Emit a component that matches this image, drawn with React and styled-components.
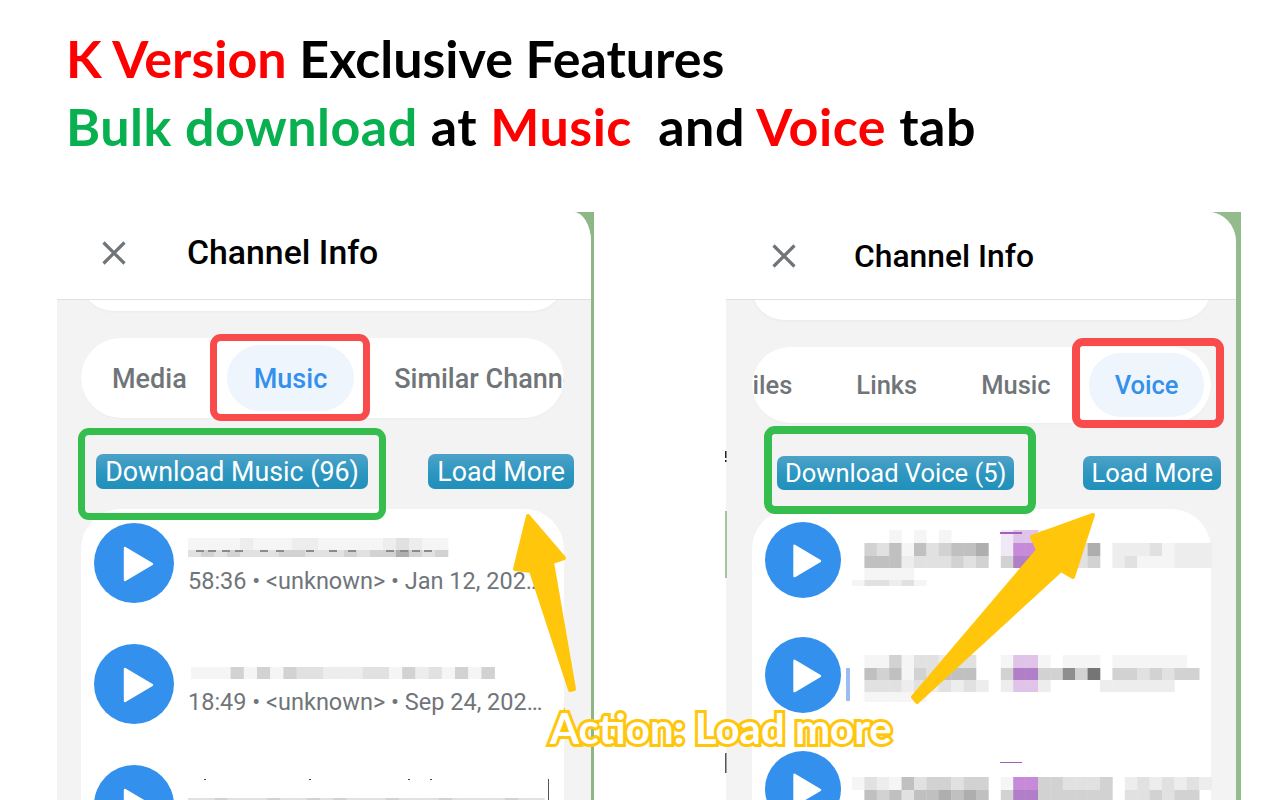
import styled, { ThemeProvider, createGlobalStyle } from "styled-components";

const GlobalStyle = createGlobalStyle`
  html, body {
    margin: 0;
    background: #fff;
    font-family: Roboto, "Liberation Sans", sans-serif;
  }
`;

const leftPanel = {
  width: 537,
  strip: 3,
  stripBg: "#8db886",
  corners: "18px 18px 0 0 / 22px 30px 0 0",
  headerTitle: 33.8,
  headerShift: 6,
  closeLeft: 45,
  titleGap: 61,
  sidePadLeft: 24,
  sidePadRight: 27,
  stub: 11,
  tabsHeight: 80,
  tabFont: 27,
  tabPad: 27,
  tabPill: 66,
  tabLine: 68,
  tabsAlign: "flex-start",
  tabsPadLeft: 4,
  toolbarTop: 36,
  buttonHeight: 35,
  buttonFont: 26.8,
  buttonPad: 9,
  toolbarPadLeft: 15,
  toolbarOver: 10,
  listTop: 20,
  rowHeight: 121,
  rowTop: 14,
  play: 80,
  rowGap: 14,
};

const rightPanel = {
  width: 515,
  strip: 5,
  stripBg: "#93bb8c",
  corners: "28px 28px 0 0 / 28px 30px 0 0",
  headerTitle: 31.8,
  headerShift: 0,
  closeLeft: 46,
  titleGap: 58,
  sidePadLeft: 26,
  sidePadRight: 25,
  stub: 20,
  tabsHeight: 76,
  tabFont: 25.5,
  tabPad: 25.5,
  tabPill: 64,
  tabLine: 64,
  tabsAlign: "flex-end",
  tabsPadLeft: 0,
  toolbarTop: 33,
  buttonHeight: 34,
  buttonFont: 25.5,
  buttonPad: 8,
  toolbarPadLeft: 25,
  toolbarOver: 10,
  listTop: 19,
  rowHeight: 114.5,
  rowTop: 13,
  play: 76,
  rowGap: 11,
};

const shades = {
  a: "#f5f5f5",
  b: "#ededed",
  c: "#e1e1e1",
  d: "#d2d2d2",
  e: "#c0c0c0",
  f: "#aeaeae",
  g: "#8e8e8e",
  h: "#747474",
  p: "#c68ad8",
  q: "#b17ec8",
  r: "#dfc3e8",
  s: "#f1e8f5",
};

const Page = styled.div`
  position: relative;
  width: 1280px;
  height: 800px;
  overflow: hidden;
  background: #fff;
`;

const Heading = styled.header`
  height: 212px;
  box-sizing: border-box;
  padding: 24px 0 0 66px;
  font-family: Lato, "Open Sans", sans-serif;
  font-weight: 700;
  font-size: 52px;
  line-height: 68px;
  color: #000;
  white-space: pre;
`;

const HeadingLine = styled.div`
  letter-spacing: ${(p) => p.$spacing || 0}px;
`;

const Accent = styled.span`
  color: ${(p) => p.$color};
`;

const Panels = styled.main`
  display: flex;
  gap: 132px;
  padding-left: 57px;
  height: 588px;
`;

const Panel = styled.section`
  width: ${(p) => p.theme.width}px;
  height: 100%;
  box-sizing: border-box;
  padding-right: ${(p) => p.theme.strip}px;
  background: linear-gradient(90deg, transparent 90%, ${(p) => p.theme.stripBg} 90%);
`;

const Sheet = styled.div`
  height: 100%;
  display: flex;
  flex-direction: column;
  overflow: hidden;
  background: #f3f3f4;
  border-radius: ${(p) => p.theme.corners};
`;

const PanelHeader = styled.div`
  position: relative;
  z-index: 1;
  flex: none;
  height: 88px;
  box-sizing: border-box;
  display: flex;
  align-items: center;
  padding: 0 0 ${(p) => p.theme.headerShift}px ${(p) => p.theme.closeLeft}px;
  gap: ${(p) => p.theme.titleGap}px;
  background: #fff;
  border-bottom: 1px solid #dfdfe7;
`;

const CloseIcon = styled.svg`
  width: 24px;
  height: 24px;
  flex: none;
`;

const PanelTitle = styled.h1`
  margin: 0;
  font-size: ${(p) => p.theme.headerTitle}px;
  font-weight: 500;
  color: #000;
`;

const Body = styled.div`
  padding: 0 ${(p) => p.theme.sidePadRight}px 0 ${(p) => p.theme.sidePadLeft}px;
`;

// the card above the tabs is scrolled under the header, only its bottom shows
const ProfileStub = styled.div`
  height: 80px;
  margin-top: ${(p) => p.theme.stub - 80}px;
  background: #fff;
  border-radius: 0 0 32px 32px;
  box-shadow: 0 1px 3px rgba(0, 0, 0, 0.04);
`;

const Tabs = styled.nav`
  margin-top: 27px;
  height: ${(p) => p.theme.tabsHeight}px;
  box-sizing: border-box;
  display: flex;
  align-items: center;
  justify-content: ${(p) => p.theme.tabsAlign};
  gap: 13px;
  padding: 0 7px 0 ${(p) => p.theme.tabsPadLeft}px;
  overflow: hidden;
  background: #fff;
  border-radius: 40px;
  box-shadow: 0 1px 2px rgba(0, 0, 0, 0.03);
`;

const Tab = styled.div`
  flex: none;
  height: ${(p) => p.theme.tabPill}px;
  line-height: ${(p) => p.theme.tabLine}px;
  padding: 0 ${(p) => p.theme.tabPad}px;
  border-radius: 33px;
  font-size: ${(p) => p.theme.tabFont}px;
  font-weight: 500;
  color: ${(p) => (p.$active ? "#3390ec" : "#707579")};
  background: ${(p) => (p.$active ? "#eef5fd" : "transparent")};
  white-space: nowrap;
`;

const Toolbar = styled.div`
  margin: ${(p) => p.theme.toolbarTop}px -${(p) => p.theme.toolbarOver}px 0 0;
  padding-left: ${(p) => p.theme.toolbarPadLeft}px;
  display: flex;
  justify-content: space-between;
`;

const ActionButton = styled.button`
  height: ${(p) => p.theme.buttonHeight}px;
  min-width: ${(p) => p.$min || 0}px;
  padding: 2px ${(p) => p.theme.buttonPad}px 0;
  border: none;
  border-radius: 7px;
  background: linear-gradient(180deg, #4ea2c8 0%, #2f97c0 50%, #1f90bb 100%);
  color: #fff;
  font-family: Roboto, sans-serif;
  font-size: ${(p) => p.theme.buttonFont}px;
  font-weight: 400;
  line-height: 1;
  white-space: nowrap;
`;

const List = styled.div`
  margin-top: ${(p) => p.theme.listTop}px;
  padding-top: ${(p) => p.theme.rowTop}px;
  padding-left: 13px;
  height: 400px;
  background: #fff;
  border-radius: 40px 40px 0 0;
`;

const Row = styled.div`
  height: ${(p) => p.theme.rowHeight}px;
  display: flex;
  gap: ${(p) => p.theme.rowGap}px;
`;

const PlayCircle = styled.svg`
  flex: none;
  width: ${(p) => p.theme.play}px;
  height: ${(p) => p.theme.play}px;
`;

const Info = styled.div`
  min-width: 0;
  flex: 1;
`;

const Blur = styled.svg`
  display: block;
  overflow: visible;
`;

const Meta = styled.div`
  font-size: 23.5px;
  line-height: 30px;
  color: #707579;
  white-space: nowrap;
`;

const Highlight = styled.div`
  position: absolute;
  left: ${(p) => p.$x}px;
  top: ${(p) => p.$y}px;
  width: ${(p) => p.$w}px;
  height: ${(p) => p.$h}px;
  box-sizing: border-box;
  border: ${(p) => p.$b}px solid ${(p) => p.$color};
  border-radius: 11px;
`;

const Overlay = styled.svg`
  position: absolute;
  inset: 0;
  pointer-events: none;
`;

const Callout = styled.div`
  position: absolute;
  left: 550px;
  top: 701px;
  font-family: Lato, sans-serif;
  font-size: 42px;
  line-height: 54px;
  font-weight: 700;
  color: #fff;
  white-space: nowrap;
  -webkit-text-stroke: 6px #ffc60b;
  paint-order: stroke fill;
`;

const Close = () => (
  <CloseIcon viewBox="0 0 24 24">
    <path d="M1.5 1.5 22.5 22.5M22.5 1.5 1.5 22.5" stroke="#707579" strokeWidth="3.2" fill="none" />
  </CloseIcon>
);

const Play = () => (
  <PlayCircle viewBox="0 0 80 80">
    <circle cx="40" cy="40" r="40" fill="#3390ec" />
    <path d="M31 25 58 41 31 57Z" fill="#fff" stroke="#fff" strokeWidth="2.4" strokeLinejoin="round" />
  </PlayCircle>
);

// pixelated names from the screenshot, one string per mosaic band
const Mosaic = ({ width, height, x0, cell, bands, extras = [] }) => (
  <Blur width={width} height={height}>
    <defs>
      <filter id="soft" x="-5%" y="-5%" width="110%" height="110%">
        <feGaussianBlur stdDeviation="0.7" />
      </filter>
    </defs>
    <g filter="url(#soft)">
      {bands.map((band) =>
        [...band.cells].map((c, i) =>
          shades[c] ? (
            <rect
              key={`${band.y}-${i}`}
              x={x0 + i * cell}
              y={band.y}
              width={cell + 0.3}
              height={band.h}
              fill={shades[c]}
            />
          ) : null
        )
      )}
    </g>
    {extras.map((r) => (
      <rect key={`${r.x}-${r.y}`} x={r.x} y={r.y} width={r.w} height={r.h} fill={r.fill} />
    ))}
  </Blur>
);

const nameBits = [8, 20, 34, 47, 72, 88, 118, 141, 160, 198, 212, 224, 236].map((x) => ({
  x,
  y: 27,
  w: 8,
  h: 2,
  fill: "#8b8b8b",
}));

const MusicTab = () => (
  <ThemeProvider theme={leftPanel}>
    <Panel>
      <Sheet>
        <PanelHeader>
          <Close />
          <PanelTitle>Channel Info</PanelTitle>
        </PanelHeader>
        <Body>
          <ProfileStub />
          <Tabs>
            <Tab>Media</Tab>
            <Tab $active>Music</Tab>
            <Tab>Similar Channels</Tab>
          </Tabs>
          <Toolbar>
            <ActionButton $min={272}>Download Music (96)</ActionButton>
            <ActionButton>Load More</ActionButton>
          </Toolbar>
          <List>
            <Row>
              <Play />
              <Info>
                <Mosaic
                  width={370}
                  height={43}
                  x0={0}
                  cell={13}
                  bands={[
                    { y: 15, h: 12, cells: "aaaabaaabbaaaaabcbaa" },
                    { y: 27, h: 7, cells: "cdcdcccddcccdcddfdcd" },
                  ]}
                  extras={nameBits}
                />
                <Meta>58:36 • &lt;unknown&gt; • Jan 12, 202…</Meta>
              </Info>
            </Row>
            <Row>
              <Play />
              <Info>
                <Mosaic
                  width={370}
                  height={43}
                  x0={3}
                  cell={13.2}
                  bands={[{ y: 23, h: 12, cells: "aaadadadccbbbccadbcadad" }]}
                />
                <Meta>18:49 • &lt;unknown&gt; • Sep 24, 202…</Meta>
              </Info>
            </Row>
            <Row>
              <Play />
              <Info>
                <Mosaic
                  width={370}
                  height={43}
                  x0={0}
                  cell={13.2}
                  bands={[{ y: 33, h: 10, cells: "ccdcccdccdcdcccdcccdccccdcc" }]}
                  extras={[
                    { x: 16, y: 14, w: 2, h: 1, fill: "#444" },
                    { x: 121, y: 14, w: 2, h: 1, fill: "#444" },
                    { x: 220, y: 14, w: 2, h: 1, fill: "#444" },
                    { x: 242, y: 14, w: 2, h: 1, fill: "#444" },
                    { x: 360, y: 14, w: 1, h: 30, fill: "#555" },
                  ]}
                />
              </Info>
            </Row>
          </List>
        </Body>
      </Sheet>
    </Panel>
  </ThemeProvider>
);

const VoiceTab = () => (
  <ThemeProvider theme={rightPanel}>
    <Panel>
      <Sheet>
        <PanelHeader>
          <Close />
          <PanelTitle>Channel Info</PanelTitle>
        </PanelHeader>
        <Body>
          <ProfileStub />
          <Tabs>
            <Tab>Files</Tab>
            <Tab>Links</Tab>
            <Tab>Music</Tab>
            <Tab $active>Voice</Tab>
          </Tabs>
          <Toolbar>
            <ActionButton>Download Voice (5)</ActionButton>
            <ActionButton>Load More</ActionButton>
          </Toolbar>
          <List>
            <Row>
              <Play />
              <Info>
                <Mosaic
                  width={370}
                  height={90}
                  x0={0}
                  cell={12.4}
                  bands={[
                    { y: 8, h: 13, cells: "...a.a.a....srrb" },
                    { y: 21, h: 13, cells: ".dceaecdeef.sppccccf.bbbcabbb" },
                    { y: 34, h: 12, cells: ".eeebcccdcd.dqqdddcd.bcaaabbb" },
                    { y: 46, h: 12, cells: ".aaaa" },
                    { y: 58, h: 6, cells: "accbca" },
                  ]}
                  extras={[{ x: 148, y: 10, w: 22, h: 2, fill: "#a060c0" }]}
                />
              </Info>
            </Row>
            <Row>
              <Play />
              <Info>
                <Mosaic
                  width={370}
                  height={90}
                  x0={0}
                  cell={12.4}
                  bands={[
                    { y: 18, h: 13, cells: ".aadaccbcc..arra.aaa.aaaaaa" },
                    { y: 31, h: 12, cells: ".edeadceee..dqqddgdh.ddcdcdd" },
                    { y: 43, h: 12, cells: ".cccbcbcbcb.brrb....bbbbbb" },
                    { y: 55, h: 10, cells: ".aaaaa" },
                  ]}
                  extras={[{ x: -6, y: 31, w: 4, h: 33, fill: "#9dbdf0" }]}
                />
              </Info>
            </Row>
            <Row>
              <Play />
              <Info>
                <Mosaic
                  width={370}
                  height={90}
                  x0={0}
                  cell={12.4}
                  bands={[
                    { y: 26, h: 13, cells: "acbaecddcdd.appddcccd.bcbcbcb" },
                    { y: 39, h: 13, cells: ".edeceefefe.dqqdddddd.ccdcdd" },
                  ]}
                  extras={[{ x: 148, y: 11, w: 22, h: 1, fill: "#a060c0" }]}
                />
              </Info>
            </Row>
          </List>
        </Body>
      </Sheet>
    </Panel>
  </ThemeProvider>
);

export default function App() {
  return (
    <Page>
      <GlobalStyle />
      <Heading>
        <HeadingLine>
          <Accent $color="#ff0000">K Version</Accent> Exclusive Features
        </HeadingLine>
        <HeadingLine $spacing={0.5}>
          <Accent $color="#08b050">Bulk download</Accent> at <Accent $color="#ff0000">Music</Accent>
          {"  "}and <Accent $color="#ff0000">Voice</Accent> tab
        </HeadingLine>
      </Heading>
      <Panels>
        <MusicTab />
        <VoiceTab />
      </Panels>
      <Highlight $x={210} $y={334} $w={160} $h={87} $b={7} $color="#f94b4b" />
      <Highlight $x={78} $y={428} $w={308} $h={92} $b={7} $color="#35bd4e" />
      <Highlight $x={1072} $y={338} $w={152} $h={90} $b={8} $color="#f94b4b" />
      <Highlight $x={764} $y={426} $w={272} $h={88} $b={8} $color="#35bd4e" />
      <Overlay width="1280" height="800" viewBox="0 0 1280 800">
        <path
          d="M528 516 564 558 552 562 574 689 570 690 531 571 515 569Z"
          fill="#ffc60b"
          stroke="#ffc60b"
          strokeWidth="4"
          strokeLinejoin="round"
        />
        <path
          d="M1093 515 1073 577 1061 570 917 702 913 697 1038 550 1032 537Z"
          fill="#ffc60b"
          stroke="#ffc60b"
          strokeWidth="4"
          strokeLinejoin="round"
        />
        <rect x="725" y="511" width="2" height="67" fill="#a5c5a0" />
        <rect x="725" y="451" width="1.5" height="7" fill="#222" />
        <rect x="725" y="460" width="1.5" height="2" fill="#222" />
        <rect x="725" y="753" width="1.5" height="20" fill="#555" />
      </Overlay>
      <Callout>Action: Load more</Callout>
    </Page>
  );
}
